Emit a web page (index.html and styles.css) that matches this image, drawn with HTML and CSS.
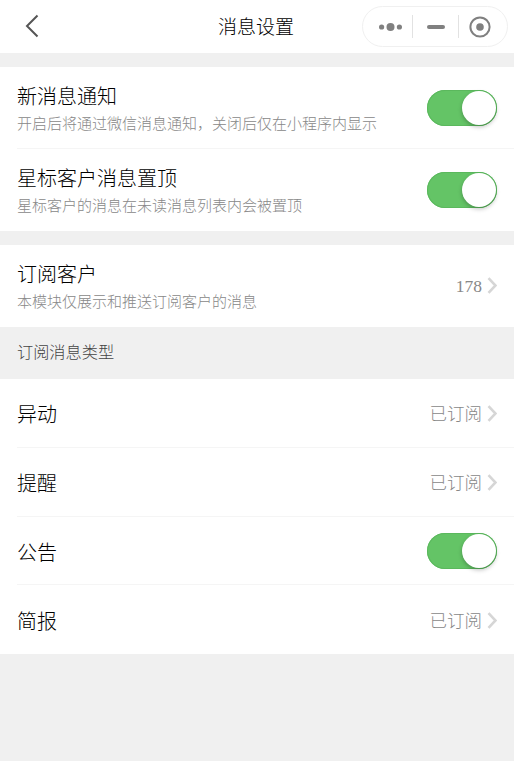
FILE: index.html
```html
<!DOCTYPE html>
<html lang="zh-CN">
<head>
    <meta charset="UTF-8">
    <meta name="viewport" content="width=device-width, initial-scale=1.0">
    <title>消息设置</title>
    <link rel="stylesheet" href="styles.css">
</head>
<body>
    <div class="nav">
        <svg class="back" width="14" height="24" viewBox="0 0 14 24"><path d="M12.5 1.5 2 12l10.5 10.5" fill="none" stroke="#555" stroke-width="2"/></svg>
        <h1 class="nav-title">消息设置</h1>
        <div class="capsule">
            <svg class="capsule-icon" width="25" height="12" viewBox="0 0 25 12"><circle cx="3.6" cy="6" r="2.6"/><circle cx="12.5" cy="6" r="4"/><circle cx="21.4" cy="6" r="2.6"/></svg>
            <span class="capsule-line line-first"></span>
            <span class="capsule-minus"></span>
            <span class="capsule-line line-second"></span>
            <svg class="capsule-icon" width="22" height="22" viewBox="0 0 22 22"><circle cx="11" cy="11" r="9.6" fill="none" stroke="#808080" stroke-width="2"/><circle cx="11" cy="11" r="3.8"/></svg>
        </div>
    </div>

    <div class="section">
        <div class="row row-tall">
            <div class="row-text">
                <div class="row-title">新消息通知</div>
                <div class="row-desc">开启后将通过微信消息通知，关闭后仅在小程序内显示</div>
            </div>
            <span class="switch"></span>
        </div>
        <div class="row row-tall">
            <div class="row-text">
                <div class="row-title">星标客户消息置顶</div>
                <div class="row-desc">星标客户的消息在未读消息列表内会被置顶</div>
            </div>
            <span class="switch"></span>
        </div>
    </div>

    <div class="section section-last">
        <div class="row row-tall">
            <div class="row-text">
                <div class="row-title">订阅客户</div>
                <div class="row-desc">本模块仅展示和推送订阅客户的消息</div>
            </div>
            <span class="row-value">178</span>
            <svg class="arrow" width="10" height="17" viewBox="0 0 10 17"><path d="M1.5 1.2 8.5 8.5l-7 7.3" fill="none" stroke="#d6d6d6" stroke-width="2.6"/></svg>
        </div>
    </div>

    <div class="group-label">订阅消息类型</div>

    <div class="list">
        <div class="row">
            <div class="row-title">异动</div>
            <span class="row-value">已订阅</span>
            <svg class="arrow" width="10" height="17" viewBox="0 0 10 17"><path d="M1.5 1.2 8.5 8.5l-7 7.3" fill="none" stroke="#d6d6d6" stroke-width="2.6"/></svg>
        </div>
        <div class="row">
            <div class="row-title">提醒</div>
            <span class="row-value">已订阅</span>
            <svg class="arrow" width="10" height="17" viewBox="0 0 10 17"><path d="M1.5 1.2 8.5 8.5l-7 7.3" fill="none" stroke="#d6d6d6" stroke-width="2.6"/></svg>
        </div>
        <div class="row">
            <div class="row-title">公告</div>
            <span class="switch"></span>
        </div>
        <div class="row">
            <div class="row-title">简报</div>
            <span class="row-value">已订阅</span>
            <svg class="arrow" width="10" height="17" viewBox="0 0 10 17"><path d="M1.5 1.2 8.5 8.5l-7 7.3" fill="none" stroke="#d6d6d6" stroke-width="2.6"/></svg>
        </div>
    </div>
</body>
</html>
```

FILE: styles.css
```css
* {
    margin: 0;
    padding: 0;
    box-sizing: border-box;
    font-family: "Liberation Serif", "Noto Sans CJK SC", serif;
}

body {
    background-color: #f0f0f0;
    height: 761px;
    overflow: hidden;
}

.nav {
    display: grid;
    grid-template-columns: 1fr auto 1fr;
    align-items: center;
    height: 53px;
    padding: 0 6px 2px;
    background: white;
    margin-bottom: 14px;
}

.back {
    margin-left: 19px;
}

.nav-title {
    font-size: 19px;
    font-weight: 300;
    color: #000;
    margin-right: 2px;
}

.capsule {
    display: flex;
    align-items: center;
    justify-self: end;
    width: 146px;
    height: 41px;
    padding-left: 15px;
    border: 1px solid #f0f0f0;
    border-radius: 21px;
    margin-top: 2px;
}

.capsule-icon {
    fill: #808080;
    flex: none;
}

.capsule-line {
    width: 1px;
    height: 23px;
    background: #e2e2e2;
}

.line-first {
    margin: 0 14px 0 9px;
}

.line-second {
    margin: 0 10px 0 13px;
}

.capsule-minus {
    width: 18px;
    height: 4px;
    border-radius: 2px;
    background: #808080;
}

.section {
    background: white;
    margin-bottom: 14px;
    padding-left: 17px;
}

.section-last {
    margin-bottom: 0;
}

.list {
    background: white;
    padding-left: 17px;
}

.row {
    display: flex;
    align-items: center;
    height: 68.75px;
    padding-right: 17px;
    border-bottom: 1px solid #f5f5f5;
}

.row-tall {
    height: 82px;
}

.section .row:last-child,
.list .row:last-child {
    border-bottom: none;
}

.row-text {
    flex: 1;
    min-width: 0;
    padding-top: 2px;
}

.row-title {
    font-size: 20px;
    font-weight: 300;
    line-height: 28px;
    color: #000;
    flex: 1;
}

.list .row-title {
    padding-top: 5px;
}

.row-desc {
    font-size: 15px;
    font-weight: 300;
    line-height: 21px;
    color: #888;
    margin-top: 3px;
}

.row-value {
    font-size: 17.5px;
    font-weight: 300;
    color: #888;
    margin-right: 5px;
}

.arrow {
    flex: none;
    margin-top: -1px;
}

.list .arrow {
    margin-top: 1px;
}

.group-label {
    height: 52px;
    line-height: 52px;
    padding-left: 17px;
    font-size: 16.2px;
    font-weight: 300;
    color: #444;
}

.switch {
    position: relative;
    flex: none;
    width: 70px;
    height: 36px;
    border-radius: 18px;
    background: #64c466;
    box-shadow: inset 0 0 0 1px #5bb85d;
}

.list .switch {
    margin-top: 1px;
}

.switch::after {
    content: "";
    position: absolute;
    top: 1px;
    right: 1px;
    width: 34px;
    height: 34px;
    border-radius: 50%;
    background: white;
    box-shadow: 0 2px 4px rgba(0, 0, 0, 0.25);
}
```
